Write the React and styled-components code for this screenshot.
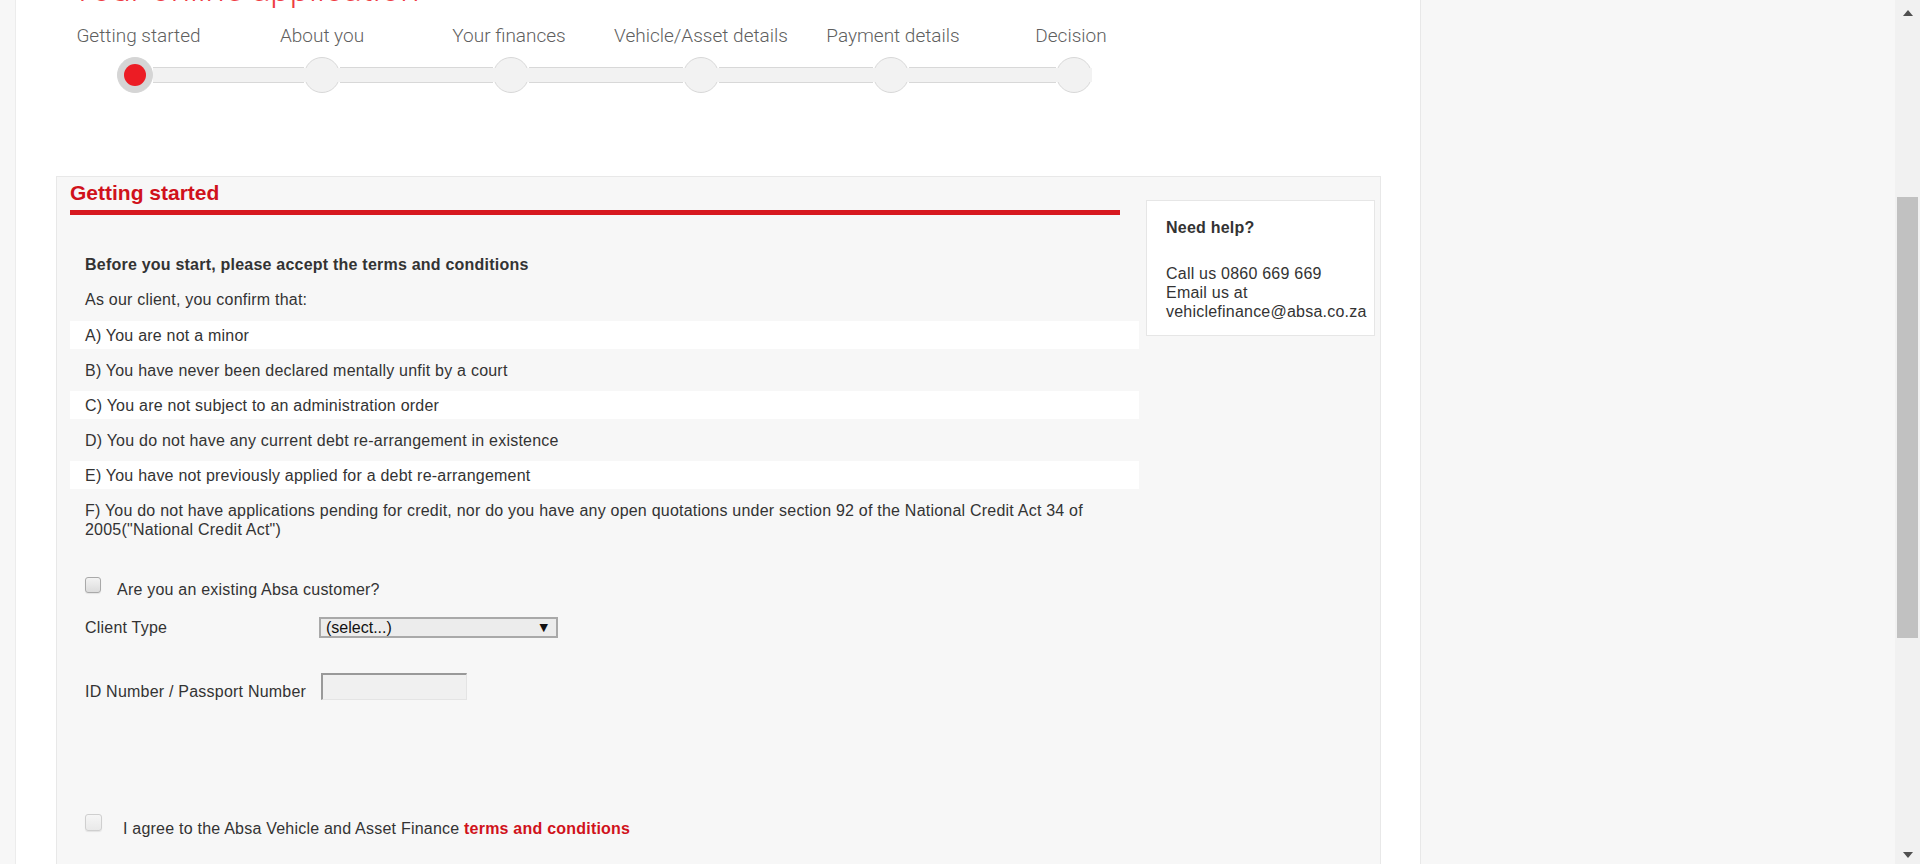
import React from "react"
import styled, { createGlobalStyle } from "styled-components"

const GlobalStyle = createGlobalStyle`
  html, body {
    margin: 0;
    padding: 0;
    height: 100%;
    overflow: hidden;
  }
  body {
    font-family: "Liberation Sans", Arial, sans-serif;
    font-size: 16px;
    letter-spacing: 0.22px;
    color: #333;
    background: #fff;
  }
`

const Page = styled.div`
  display: flex;
  width: 1920px;
  height: 864px;
  overflow: hidden;
`

const Gutter = styled.div`
  flex: none;
  width: 15px;
  background: #f7f7f7;
  border-right: 1px solid #ececec;
`

const Main = styled.div`
  flex: none;
  width: 1404px;
  background: #fff;
`

const SideArea = styled.div`
  flex: 1;
  background: #f7f7f7;
  border-left: 1px solid #e8e8e8;
`

const Title = styled.h1`
  margin: -27px 0 0 56px;
  font-family: Roboto, "Liberation Sans", sans-serif;
  font-weight: 300;
  font-size: 35px;
  line-height: 34px;
  letter-spacing: 0;
  color: #ef3b43;
  white-space: nowrap;
`

// progress stepper
const Steps = styled.div`
  display: grid;
  grid-template-columns: 188px 186px 192px 188px 192px 174px;
  margin: 18px 0 0 25px;
`

const Step = styled.div`
  display: flex;
  flex-direction: column;
  align-items: stretch;
`

const StepLabel = styled.div`
  margin-left: ${p => p.$shift * 2}px;
  font-family: Roboto, "Liberation Sans", sans-serif;
  font-weight: 300;
  font-size: 19px;
  line-height: 22px;
  letter-spacing: 0;
  color: #5f5f5f;
  text-align: center;
  white-space: nowrap;
`

const TrackRow = styled.div`
  display: flex;
  align-items: center;
  height: 36px;
  margin-top: 10px;
`

const Segment = styled.div`
  flex: 1;
  height: 14px;
  background: #f2f2f2;
  border-top: 1px solid #d8d8d8;
  border-bottom: 1px solid #d8d8d8;
  visibility: ${p => (p.$hidden ? "hidden" : "visible")};
`

const Dot = styled.div`
  position: relative;
  flex: none;
  width: 34px;
  height: 34px;
  border-radius: 50%;
  display: flex;
  align-items: center;
  justify-content: center;
  border: 1px solid ${p => (p.$active ? "#d5d5d5" : "#d8d8d8")};
  background: ${p => (p.$active ? "#d5d5d5" : "#f2f2f2")};

  &::after {
    content: "";
    display: ${p => (p.$active ? "none" : "block")};
    position: absolute;
    left: -1px;
    right: -1px;
    top: 50%;
    height: 14px;
    margin-top: -7px;
    background: #f2f2f2;
  }
`

const RedDot = styled.span`
  width: 22px;
  height: 22px;
  border-radius: 50%;
  background: #ec1c24;
`

// form panel
const Panel = styled.div`
  display: flex;
  align-items: flex-start;
  box-sizing: border-box;
  width: 1325px;
  min-height: 760px;
  margin: 83px 0 0 40px;
  padding: 4px 5px 40px 13px;
  background: #f7f7f7;
  border: 1px solid #e8e8e8;
`

const FormCol = styled.div`
  flex: none;
  width: 1069px;
`

const Heading = styled.h2`
  margin: 0;
  font-size: 21px;
  line-height: 24px;
  font-weight: bold;
  letter-spacing: 0;
  color: #d0121b;
`

const RedRule = styled.div`
  width: 1050px;
  height: 5px;
  margin-top: 5px;
  background: #d71920;
`

const Intro = styled.div`
  margin-top: ${p => p.$top}px;
  padding-left: 15px;
  line-height: 19px;
  font-weight: ${p => (p.$bold ? "bold" : "normal")};
`

const Terms = styled.div`
  display: flex;
  flex-direction: column;
  gap: 7px;
  margin-top: 12px;
`

const TermRow = styled.div`
  padding: 5px 15px 4px;
  line-height: 19px;
  background: ${p => (p.$striped ? "#fff" : "transparent")};
`

const CheckRow = styled.label`
  display: flex;
  align-items: flex-start;
  margin-top: ${p => p.$top}px;
  padding-left: 15px;
  line-height: 19px;
`

const Checkbox = styled.input.attrs({ type: "checkbox" })`
  appearance: none;
  flex: none;
  width: ${p => (p.disabled ? 17 : 16)}px;
  height: ${p => (p.disabled ? 17 : 16)}px;
  margin: 0;
  border-radius: 3px;
  border: 1px solid ${p => (p.disabled ? "#cfcfcf" : "#a9a9a9")};
  background: ${p =>
    p.disabled
      ? "linear-gradient(#f6f6f6, #e9e9e9)"
      : "linear-gradient(#f3f3f3, #dcdcdc)"};
  box-shadow: 0 1px 1px rgba(0, 0, 0, 0.08);
`

const CheckText = styled.span`
  margin: ${p => p.$top}px 0 0 ${p => p.$gap}px;
`

const Strong = styled.b`
  color: #d0121b;
`

const FieldRow = styled.div`
  display: flex;
  align-items: ${p => p.$align || "center"};
  margin-top: ${p => p.$top}px;
  padding-left: 15px;
  line-height: 19px;
`

const FieldLabel = styled.div`
  flex: none;
  width: ${p => (p.$width ? `${p.$width}px` : "auto")};
  margin-bottom: ${p => p.$drop || 0}px;
`

const SelectBox = styled.div`
  display: flex;
  align-items: center;
  justify-content: space-between;
  box-sizing: border-box;
  width: 239px;
  height: 21px;
  padding: 0 8px 0 5px;
  border: 2px solid #a9a9a9;
  background: #ececec;
  color: #111;
  line-height: 17px;
  letter-spacing: 0;
`

const Caret = styled.span`
  font-family: "DejaVu Sans", sans-serif;
  font-size: 11px;
  color: #111;
`

const TextInput = styled.input`
  box-sizing: border-box;
  width: 146px;
  height: 27px;
  margin: 0 0 0 15px;
  border-top: 2px solid #999;
  border-left: 2px solid #999;
  border-right: 1px solid #e4e4e4;
  border-bottom: 1px solid #e4e4e4;
  background: #f0f0f0;
  outline: none;
`

const HelpBox = styled.div`
  flex: none;
  box-sizing: border-box;
  width: 229px;
  margin: 19px 0 0 7px;
  padding: 17px 8px 14px 19px;
  background: #fff;
  border: 1px solid #e6e6e6;
  line-height: 19px;
`

const HelpTitle = styled.div`
  font-weight: bold;
  line-height: 19px;
  color: #333;
`

const HelpBody = styled.div`
  margin-top: 27px;
`

// fake browser scrollbar
const Scrollbar = styled.div`
  flex: none;
  width: 25px;
  display: flex;
  flex-direction: column;
  align-items: center;
  background: #f1f1f1;
`

const Arrow = styled.div`
  width: 0;
  height: 0;
  border-left: 5.5px solid transparent;
  border-right: 5.5px solid transparent;
  ${p =>
    p.$down
      ? "border-top: 6px solid #505050; margin-bottom: 6px;"
      : "border-bottom: 6px solid #505050; margin-top: 10px;"}
`

const Thumb = styled.div`
  width: 21px;
  height: 441px;
  margin-top: 181px;
  background: #c1c1c1;
`

const Spacer = styled.div`
  flex: 1;
`

const steps = [
  { label: "Getting started", shift: 3.5 },
  { label: "About you", shift: 0 },
  { label: "Your finances", shift: -2 },
  { label: "Vehicle/Asset details", shift: 0 },
  { label: "Payment details", shift: 2 },
  { label: "Decision", shift: -3 },
]

const terms = [
  "A) You are not a minor",
  "B) You have never been declared mentally unfit by a court",
  "C) You are not subject to an administration order",
  "D) You do not have any current debt re-arrangement in existence",
  "E) You have not previously applied for a debt re-arrangement",
  'F) You do not have applications pending for credit, nor do you have any open quotations under section 92 of the National Credit Act 34 of 2005("National Credit Act")',
]

const App = () => {
  return (
    <>
      <GlobalStyle />
      <Page>
        <Gutter />
        <Main>
          <Title>Your online application</Title>
          <Steps>
            {steps.map((s, i) => (
              <Step key={s.label}>
                <StepLabel $shift={s.shift}>{s.label}</StepLabel>
                <TrackRow>
                  <Segment $hidden={i === 0} />
                  <Dot $active={i === 0}>{i === 0 && <RedDot />}</Dot>
                  <Segment $hidden={i === steps.length - 1} />
                </TrackRow>
              </Step>
            ))}
          </Steps>

          <Panel>
            <FormCol>
              <Heading>Getting started</Heading>
              <RedRule />
              <Intro $top={40} $bold>Before you start, please accept the terms and conditions</Intro>
              <Intro $top={16}>As our client, you confirm that:</Intro>
              <Terms>
                {terms.map((t, i) => (
                  <TermRow key={i} $striped={i % 2 === 0 && i < 5}>{t}</TermRow>
                ))}
              </Terms>

              <CheckRow $top={34}>
                <Checkbox />
                <CheckText $top={3} $gap={16}>Are you an existing Absa customer?</CheckText>
              </CheckRow>

              <FieldRow $top={18}>
                <FieldLabel $width={234}>Client Type</FieldLabel>
                <SelectBox>
                  <span>(select...)</span>
                  <Caret>▼</Caret>
                </SelectBox>
              </FieldRow>

              <FieldRow $top={35} $align="flex-end">
                <FieldLabel $drop={-1}>ID Number / Passport Number</FieldLabel>
                <TextInput />
              </FieldRow>

              <CheckRow $top={114}>
                <Checkbox disabled />
                <CheckText $top={5} $gap={21}>
                  I agree to the Absa Vehicle and Asset Finance <Strong>terms and conditions</Strong>
                </CheckText>
              </CheckRow>
            </FormCol>

            <HelpBox>
              <HelpTitle>Need help?</HelpTitle>
              <HelpBody>
                Call us 0860 669 669
                <br />
                Email us at
                <br />
                vehiclefinance@absa.co.za
              </HelpBody>
            </HelpBox>
          </Panel>
        </Main>
        <SideArea />
        <Scrollbar>
          <Arrow />
          <Thumb />
          <Spacer />
          <Arrow $down />
        </Scrollbar>
      </Page>
    </>
  )
}

export default App
